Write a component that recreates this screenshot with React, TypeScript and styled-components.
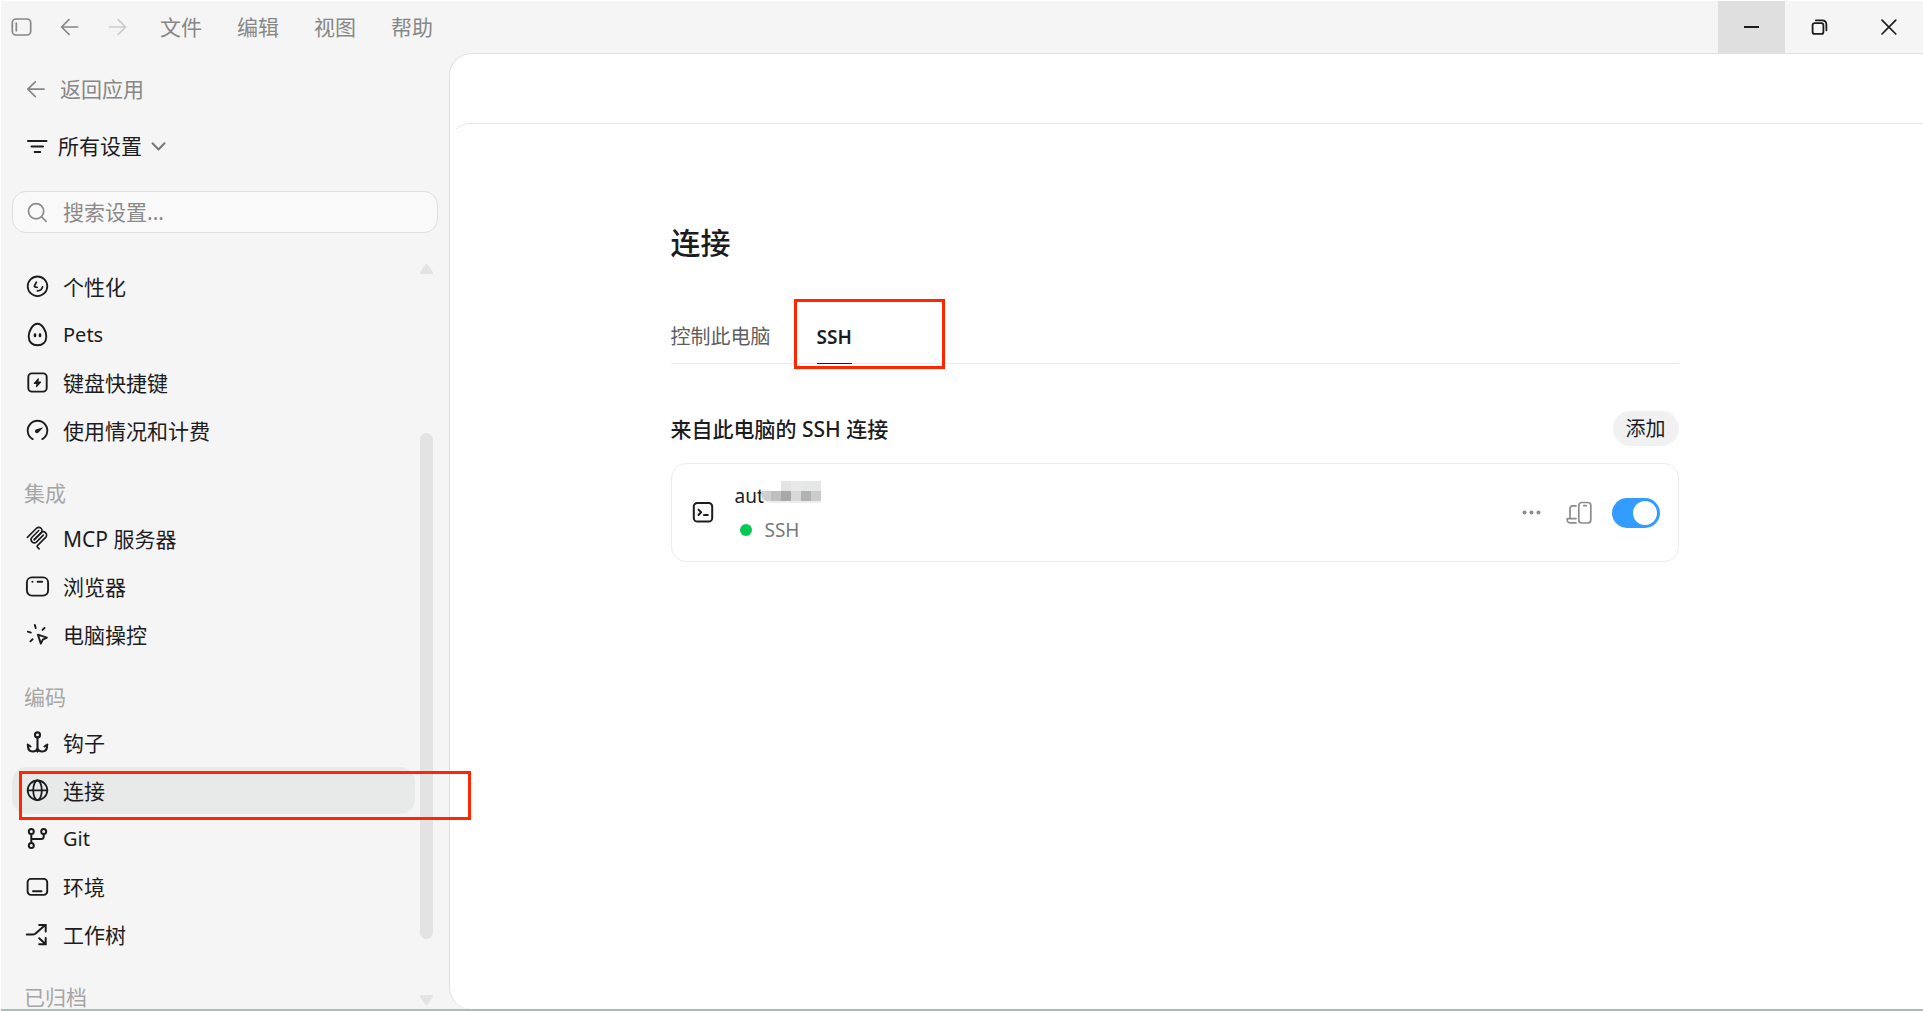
import React from "react";
import styled, { createGlobalStyle, css } from "styled-components";

const Global = createGlobalStyle`
  * { box-sizing: border-box; }
  html, body { margin: 0; padding: 0; background: #fff; }
  body, button, input, select {
    font-family: "Noto Sans", "Noto Sans CJK SC", sans-serif;
    font-size: 21px;
    line-height: 28px;
    font-weight: 400;
    color: #1c1c1f;
  }
  button, input, select { background: none; border: 0; padding: 0; margin: 0; }
  h1, h2, h3, p, ul { margin: 0; padding: 0; font-weight: 400; }
  ul { list-style: none; }
`;

const Window = styled.div`
  height: 100vh;
  display: flex;
  flex-direction: column;
  overflow: hidden;
  background: #f5f5f5;
  border-top: 1px solid #fff;
  border-left: 1px solid #fff;
`;

const TitleBar = styled.header`
  flex: none;
  height: 52px;
  display: flex;
  align-items: center;
  padding-left: 4px;
`;

const BarButtons = styled.div`
  display: flex;
  gap: 16px;
  margin-right: 27px;
`;

const BarButton = styled.button<{ $dim?: boolean }>`
  width: 32px;
  height: 32px;
  display: grid;
  place-items: center;
  color: ${(p) => (p.$dim ? "#cbcbcb" : "#878787")};
`;

const Menu = styled.nav`
  display: flex;
  gap: 35px;
`;

const MenuButton = styled.button`
  color: #878787;
`;

const WindowControls = styled.div`
  margin-left: auto;
  align-self: stretch;
  display: grid;
  grid-template-columns: 67px 69px 69px;
`;

const ControlButton = styled.button<{ $hovered?: boolean }>`
  display: grid;
  place-items: center;
  background: ${(p) => (p.$hovered ? "#dfdfdf" : "transparent")};
`;

const Body = styled.div`
  flex: 1;
  min-height: 0;
  display: flex;
`;

const Sidebar = styled.aside`
  flex: none;
  width: 448px;
  padding-top: 21px;
  display: flex;
  flex-direction: column;
`;

const SideLine = styled.div<{ $muted?: boolean; $gap: number; $after: number }>`
  flex: none;
  height: 30px;
  display: flex;
  align-items: center;
  gap: ${(p) => p.$gap}px;
  padding-left: 24px;
  margin-bottom: ${(p) => p.$after}px;
  color: ${(p) => (p.$muted ? "#878787" : "#1c1c1f")};
`;

const BackButton = styled.button`
  display: flex;
  align-items: center;
  gap: 10px;
  color: inherit;
`;

const ScopeSelect = styled.select`
  appearance: none;
  height: 30px;
`;

const Chevron = styled.span`
  display: flex;
  color: #77777a;
`;

const SearchBox = styled.label`
  flex: none;
  height: 42px;
  margin: 0 11px 30px;
  padding: 0 12px;
  display: flex;
  align-items: center;
  gap: 13px;
  color: #8a8a8a;
  background: #f9f9f9;
  border: 1px solid #dedede;
  border-radius: 14px;
`;

const SearchInput = styled.input`
  flex: 1;
  min-width: 0;
  outline: none;
  &::placeholder { color: #8a8a8a; opacity: 1; }
`;

const NavArea = styled.div`
  flex: 1;
  min-height: 0;
  display: flex;
`;

const NavScroll = styled.nav`
  flex: 1;
  padding-left: 11px;
`;

const NavHeading = styled.h2`
  padding: 24px 0 8px 12px;
  font-size: 21px;
  line-height: 28px;
  color: #a6a6a6;
`;

const NavItem = styled.li`
  position: relative;
  padding-bottom: 1px;
`;

const NavLink = styled.a<{ $active?: boolean }>`
  height: 47px;
  padding-left: 13px;
  display: flex;
  align-items: center;
  gap: 13px;
  color: inherit;
  text-decoration: none;
  border-radius: 15px;
  background: ${(p) => (p.$active ? "#e8eae9" : "transparent")};
`;

const Latin = styled.span`
  font-size: 20px;
`;

const mark = css`
  position: absolute;
  z-index: 3;
  border: 3px solid #ff2600;
  pointer-events: none;
`;

const NavMark = styled.span`
  ${mark}
  left: 7px;
  top: 4px;
  width: 452px;
  height: 49px;
`;

const TabMark = styled.span`
  ${mark}
  left: -23px;
  top: -20px;
  width: 151px;
  height: 70px;
`;

const ScrollBar = styled.div`
  flex: none;
  width: 13px;
  margin: 1px 16px 4px 5px;
  display: flex;
  flex-direction: column;
  color: #e3e3e3;
`;

const Track = styled.div`
  flex: 1;
  display: flex;
  flex-direction: column;
`;

const TrackSpace = styled.div<{ $part: number }>`
  flex: ${(p) => p.$part} 0 0;
`;

const Thumb = styled(TrackSpace)`
  background: #e3e3e3;
  border-radius: 7px;
`;

const Panel = styled.main`
  flex: 1;
  min-width: 0;
  background: #fff;
  border: 1px solid #e0e0e0;
  border-right: 0;
  border-bottom: 0;
  border-radius: 22px 0 0 22px;
  display: flex;
  flex-direction: column;
`;

const PanelHeader = styled.div`
  flex: none;
  height: 69px;
`;

const PanelContent = styled.div`
  flex: 1;
  border-top: 1px solid #e8e8e8;
  border-left: 1px solid transparent;
  border-radius: 20px 0 0 0;
  padding: 98px 25px 0 0;
`;

const Column = styled.div`
  max-width: 1008px;
  margin: 0 auto;
`;

const PageTitle = styled.h1`
  font-size: 30px;
  line-height: 42px;
  font-weight: 500;
`;

const Tabs = styled.div`
  display: flex;
  align-items: stretch;
  gap: 46px;
  margin-top: 55px;
  height: 45px;
  border-bottom: 1px solid #ebebeb;
`;

const Tab = styled.button<{ $selected?: boolean }>`
  position: relative;
  height: 45px;
  padding-bottom: 8px;
  font-size: ${(p) => (p.$selected ? 19 : 20)}px;
  font-weight: ${(p) => (p.$selected ? 600 : 400)};
  color: ${(p) => (p.$selected ? "#1c1c1f" : "#5f5f61")};
  border-bottom: 1px solid ${(p) => (p.$selected ? "#1c1c1f" : "transparent")};
`;

const SectionHead = styled.div`
  display: flex;
  align-items: center;
  justify-content: space-between;
  margin: 47px 0 17px;
`;

const SectionTitle = styled.h2`
  font-size: 21px;
  line-height: 28px;
  font-weight: 500;
`;

const AddButton = styled.button`
  height: 35px;
  padding: 0 13px;
  font-size: 20px;
  background: #f1f1f1;
  border-radius: 18px;
`;

const Card = styled.section`
  height: 99px;
  display: flex;
  align-items: center;
  padding: 0 18px 0 19px;
  border: 1px solid #ececec;
  border-radius: 15px;
`;

const HostInfo = styled.div`
  flex: 1;
  margin-left: 19px;
`;

const HostName = styled.h3`
  display: flex;
  align-items: center;
  height: 30px;
  font-size: 19px;
`;

const Mosaic = styled.span`
  display: grid;
  grid-template-columns: repeat(6, 10px);
  grid-template-rows: 10px 10px 2px;
  margin: 0 0 8px -3px;
  border-bottom-left-radius: 10px;
  overflow: hidden;
`;

const MosaicCell = styled.span<{ $tone: string }>`
  background: ${(p) => p.$tone};
`;

const HostStatus = styled.p`
  display: flex;
  align-items: center;
  gap: 13px;
  padding-left: 5px;
  margin-top: 5px;
  font-size: 19px;
  color: #77777a;
`;

const StatusDot = styled.span`
  width: 12px;
  height: 12px;
  border-radius: 50%;
  background: #04c854;
`;

const CardActions = styled.div`
  display: flex;
  align-items: center;
  gap: 20px;
`;

const IconButton = styled.button`
  display: flex;
  color: #8c8c8e;
`;

const Switch = styled.input`
  appearance: none;
  width: 48px;
  height: 30px;
  border-radius: 15px;
  background: #339cff;
  display: flex;
  align-items: center;
  justify-content: flex-end;
  padding: 0 3px;
  &::before {
    content: "";
    width: 24px;
    height: 24px;
    border-radius: 50%;
    background: #fff;
  }
`;

const TaskbarEdge = styled.div`
  flex: none;
  position: relative;
  z-index: 2;
  height: 2px;
  background: #a9bfb6;
`;

function Icon({ children, width = 2, size = 25 }: { children: React.ReactNode; width?: number; size?: number }) {
  return (
    <svg width={size} height={size} viewBox={`0 0 ${size} ${size}`} fill="none" stroke="currentColor"
      strokeWidth={width} strokeLinecap="round" strokeLinejoin="round" aria-hidden="true">
      {children}
    </svg>
  );
}

const icons = {
  personal: (
    <Icon width={1.8}><circle cx="12.5" cy="12.3" r="9.8" /><path d="M11.4 8.2 9.6 11.6c-.4.8 0 1.4.9 1.5l1.6.2M12.5 16.9c2.4-.1 4.4-1.6 5-4" /></Icon>
  ),
  pets: (
    <Icon width={1.9}>
      <path d="M12.5 1.8c4.9 0 8.8 7.3 8.8 12.7 0 5.6-3.6 8.8-8.8 8.8s-8.8-3.2-8.8-8.8C3.7 9.1 7.6 1.8 12.5 1.8Z" />
      <path d="M10 12.6v1.4M15 12.6v1.4" strokeWidth={2.6} />
    </Icon>
  ),
  keys: (
    <Icon width={1.9}><rect x="3.3" y="3.4" width="18.4" height="18.2" rx="3.6" /><path d="m13.3 8.900-4 4.500h2.900l-.7 3.200 4.100-4.600h-2.900Z" fill="currentColor" strokeWidth={1.2} /></Icon>
  ),
  usage: (
    <Icon width={1.9}><path d="M7.7 21.100A9.800 9.800 0 1 1 17.300 21.100" /><path d="M18.300 9.300 11.600 11.300c-1.700.7-2 2-1.400 3 .6 1 2.100 1.200 3.300.1Z" fill="currentColor" stroke="none" /></Icon>
  ),
  mcp: (
    <Icon width={12}>
      <g transform="scale(.134)">
        <path d="M18 84.853 85.882 16.971c9.373-9.373 24.569-9.373 33.941 0 9.373 9.372 9.373 24.568 0 33.941L68.558 102.177" />
        <path d="M69.265 101.470 119.823 50.912c9.373-9.373 24.569-9.373 33.942 0l.353.353c9.373 9.373 9.373 24.569 0 33.941L92.725 146.600c-3.124 3.124-3.124 8.189 0 11.313l12.606 12.607" />
        <path d="M102.853 33.941 52.648 84.146c-9.372 9.372-9.372 24.568 0 33.941 9.373 9.372 24.569 9.372 33.941 0L136.794 67.882" />
      </g>
    </Icon>
  ),
  browser: (
    <Icon width={1.9}><rect x="1.9" y="3.4" width="21.2" height="18.2" rx="5" /><path d="M7.4 7.8h.1M12.6 7.8h4.6" /></Icon>
  ),
  control: (
    <Icon width={1.9}><path d="m9.8 3 .9 3M19.600 5.800l-2.100 2.100M2.900 9.700l3 .9M5.400 19.400l2.200-2.100" /><path d="m12.900 12.600 9 3.100-4.100 1.900-2 4Z" /></Icon>
  ),
  hooks: (
    <Icon width={2.1}><circle cx="12.5" cy="4.9" r="2.5" /><path d="M12.500 7.600v14M3 16.300c0 3.400 1.800 5.200 4.700 5.200 2.600 0 4.400-1.300 4.800-3.500.4 2.200 2.200 3.500 4.800 3.500 2.900 0 4.700-1.800 4.700-5.200" /><path d="m2.700 14.600 2.800 1.900M22.300 14.600l-2.800 1.900M3 14.700v2M22 14.700v2" /></Icon>
  ),
  globe: (
    <Icon width={1.8}><circle cx="12.5" cy="12.3" r="9.8" /><ellipse cx="12.5" cy="12.3" rx="4.3" ry="9.8" /><path d="M2.7 12.3h19.6" /></Icon>
  ),
  git: (
    <Icon width={2}><circle cx="6.3" cy="5.4" r="2.5" /><circle cx="18.7" cy="5.4" r="2.5" /><circle cx="6.3" cy="19.5" r="2.5" /><path d="M6.3 8v9M18.700 8v2.500c0 1.700-.8 2.500-2.500 2.500H6.300" /></Icon>
  ),
  env: (
    <Icon width={1.9}><rect x="2.6" y="4.9" width="19.6" height="16" rx="3.4" /><path d="M8 17.3h8.5" /></Icon>
  ),
  tree: (
    <Icon width={2}><path d="M1.8 12.500h6.400c1.300 0 1.900-.4 2.700-1.200l9-8M14.200 3h6.500v6.500M14.200 16.200l6 5.500M14.200 22.300h6.500v-6.300" strokeLinejoin="miter" /></Icon>
  ),
};

const ArrowLeft = () => (
  <Icon width={1.7}><path d="M2.8 12.200H19M10.300 4.800 2.800 12.200l7.500 7.500" /></Icon>
);

type Item = { icon: React.ReactNode; label: React.ReactNode; active?: boolean };

const groups: { title?: string; items: Item[] }[] = [
  {
    items: [
      { icon: icons.personal, label: "个性化" },
      { icon: icons.pets, label: <Latin>Pets</Latin> },
      { icon: icons.keys, label: "键盘快捷键" },
      { icon: icons.usage, label: "使用情况和计费" },
    ],
  },
  {
    title: "集成",
    items: [
      { icon: icons.mcp, label: "MCP 服务器" },
      { icon: icons.browser, label: "浏览器" },
      { icon: icons.control, label: "电脑操控" },
    ],
  },
  {
    title: "编码",
    items: [
      { icon: icons.hooks, label: "钩子" },
      { icon: icons.globe, label: "连接", active: true },
      { icon: icons.git, label: <Latin>Git</Latin> },
      { icon: icons.env, label: "环境" },
      { icon: icons.tree, label: "工作树" },
    ],
  },
  { title: "已归档", items: [] },
];

const mosaicTones = [
  "transparent", "transparent", "#e4e4e4", "#e8eaea", "#e4e8e7", "#e7e7e7",
  "#d0d0d0", "#bfbfc1", "#a8a8a8", "#d8d8d8", "#b2b2b2", "#cbcdcc",
  "#f0f0f0", "#ececec", "#ececec", "#ececec", "#ececec", "#efefef",
];

export default function App() {
  return (
    <Window>
      <Global />
      <TitleBar>
        <BarButtons>
          <BarButton aria-label="切换边栏">
            <Icon width={1.7}><rect x="3.3" y="4" width="18.4" height="16" rx="3.8" /><path d="M7.3 8.200v7.600" /></Icon>
          </BarButton>
          <BarButton aria-label="后退">
            <Icon width={1.7}><path d="M4.6 12h16M12 4.600l-7.400 7.400 7.400 7.400" /></Icon>
          </BarButton>
          <BarButton aria-label="前进" $dim>
            <Icon width={1.7}><path d="M4.6 12h16M13.200 4.600l7.400 7.400-7.400 7.400" /></Icon>
          </BarButton>
        </BarButtons>
        <Menu>
          {["文件", "编辑", "视图", "帮助"].map((m) => <MenuButton key={m}>{m}</MenuButton>)}
        </Menu>
        <WindowControls>
          <ControlButton $hovered aria-label="最小化">
            <Icon width={2}><path d="M5 12h15" strokeLinecap="butt" /></Icon>
          </ControlButton>
          <ControlButton aria-label="还原">
            <Icon width={1.8}><rect x="5.6" y="8.1" width="10.8" height="10.8" rx="2" /><path d="M8.8 5.300h6.200c2.800 0 4.400 1.600 4.400 4.400v5.600" /></Icon>
          </ControlButton>
          <ControlButton aria-label="关闭">
            <Icon width={1.7}><path d="m6 5.200 13.800 13.800M19.800 5.200 6 19" /></Icon>
          </ControlButton>
        </WindowControls>
      </TitleBar>

      <Body>
        <Sidebar>
          <SideLine $muted $gap={10} $after={27}>
            <BackButton><ArrowLeft />返回应用</BackButton>
          </SideLine>
          <SideLine as="label" $gap={8} $after={30}>
            <Icon width={2}><path d="M3 7h18.500M6.500 12.500h11.500M9.700 18h5.500" /></Icon>
            <ScopeSelect aria-label="设置范围"><option>所有设置</option></ScopeSelect>
            <Chevron><Icon width={2}><path d="m2.500 9.300 6 6.200 6-6.200" /></Icon></Chevron>
          </SideLine>
          <SearchBox>
            <Icon width={1.7}><circle cx="11.1" cy="11.3" r="7.6" /><path d="m16.800 17 4.300 4.300" /></Icon>
            <SearchInput type="text" placeholder="搜索设置..." aria-label="搜索设置" />
          </SearchBox>
          <NavArea>
            <NavScroll>
              {groups.map((g, i) => (
                <React.Fragment key={i}>
                  {g.title && <NavHeading>{g.title}</NavHeading>}
                  <ul>
                    {g.items.map((item, j) => (
                      <NavItem key={j}>
                        <NavLink href="#" $active={item.active}>{item.icon}<span>{item.label}</span></NavLink>
                        {item.active && <NavMark />}
                      </NavItem>
                    ))}
                  </ul>
                </React.Fragment>
              ))}
            </NavScroll>
            <ScrollBar>
              <svg width="13" height="10" viewBox="0 0 13 10"><path d="M6.500 1.500 11.500 8.500h-10Z" fill="currentColor" stroke="currentColor" strokeWidth="3" strokeLinejoin="round" /></svg>
              <Track>
                <TrackSpace $part={159} />
                <Thumb $part={506} />
                <TrackSpace $part={56} />
              </Track>
              <svg width="13" height="10" viewBox="0 0 13 10"><path d="M6.500 8.500 11.500 1.500h-10Z" fill="currentColor" stroke="currentColor" strokeWidth="3" strokeLinejoin="round" /></svg>
            </ScrollBar>
          </NavArea>
        </Sidebar>

        <Panel>
          <PanelHeader />
          <PanelContent>
            <Column>
              <PageTitle>连接</PageTitle>
              <Tabs role="tablist">
                <Tab role="tab">控制此电脑</Tab>
                <Tab role="tab" $selected aria-selected="true">SSH<TabMark /></Tab>
              </Tabs>
              <SectionHead>
                <SectionTitle>来自此电脑的 SSH 连接</SectionTitle>
                <AddButton>添加</AddButton>
              </SectionHead>
              <Card>
                <Icon width={2}><rect x="2.8" y="3" width="18.4" height="18.6" rx="3.6" /><path d="m7.500 9.600 2.600 2.700-2.600 2.700M13 15h3.800" /></Icon>
                <HostInfo>
                  <HostName>
                    aut
                    <Mosaic>{mosaicTones.map((t, i) => <MosaicCell key={i} $tone={t} />)}</Mosaic>
                  </HostName>
                  <HostStatus><StatusDot />SSH</HostStatus>
                </HostInfo>
                <CardActions>
                  <IconButton aria-label="更多">
                    <Icon><g fill="currentColor" stroke="none"><circle cx="5.5" cy="12.5" r="2" /><circle cx="12.5" cy="12.5" r="2" /><circle cx="19.5" cy="12.5" r="2" /></g></Icon>
                  </IconButton>
                  <IconButton aria-label="设备">
                    <Icon size={28} width={1.7}>
                      <rect x="14.8" y="3.5" width="12" height="20.5" rx="3" />
                      <path d="M19.800 6.700h2.400M12 6.900H8.500c-1.500 0-2.500 1-2.500 2.500v9.800M12 19.600H3.800c-.6 0-.9.400-.7 1l.3 1.300c.3 1.400 1 2 2.400 2H12" />
                    </Icon>
                  </IconButton>
                  <Switch type="checkbox" role="switch" defaultChecked aria-label="启用 SSH 连接" />
                </CardActions>
              </Card>
            </Column>
          </PanelContent>
        </Panel>
      </Body>
      <TaskbarEdge />
    </Window>
  );
}
